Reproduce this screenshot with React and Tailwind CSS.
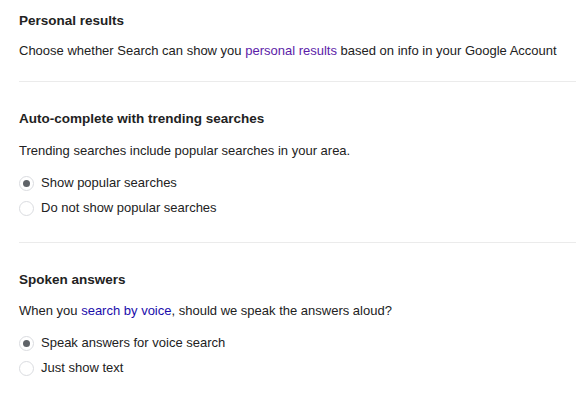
const Radio = ({ checked, label }) => (
  <label className="flex items-center h-[20px] gap-[7px] cursor-pointer">
    <span className="w-[15px] h-[15px] rounded-full border border-[#dadce0] bg-white flex items-center justify-center shrink-0">
      {checked && <span className="w-[7px] h-[7px] rounded-full bg-[#5f6368]" />}
    </span>
    <span>{label}</span>
  </label>
);

export default function App() {
  return (
    <div className="w-[576px] h-[402px] bg-white text-[#222] text-[13px] leading-[20px] overflow-hidden" style={{ fontFamily: 'Arial, "Liberation Sans", sans-serif' }}>
      {/* Personal results */}
      <div className="pl-[19px]">
        <div className="pt-[11px] pb-[20px]">
          <h2 className="font-bold text-[13.5px]">Personal results</h2>
          <p className="mt-[10px]">
            Choose whether Search can show you <a className="text-[#5c1ca8]">personal results</a> based on info in your Google Account
          </p>
        </div>
        <div className="h-px bg-[#ebebeb]" />
      </div>

      {/* Trending */}
      <div className="pl-[19px]">
        <div className="pt-[27px] pb-[24px]">
          <h2 className="font-bold text-[13.5px]">Auto-complete with trending searches</h2>
          <p className="mt-[12px]">Trending searches include popular searches in your area.</p>
          <div className="mt-[12px] flex flex-col gap-[5px]">
            <Radio checked label="Show popular searches" />
            <Radio label="Do not show popular searches" />
          </div>
        </div>
        <div className="h-px bg-[#ebebeb]" />
      </div>

      {/* Spoken answers */}
      <div className="pl-[19px]">
        <div className="pt-[27px]">
          <h2 className="font-bold text-[13.5px]">Spoken answers</h2>
          <p className="mt-[11px]">
            When you <a className="text-[#1a0dab]">search by voice</a>, should we speak the answers aloud?
          </p>
          <div className="mt-[12px] flex flex-col gap-[5px]">
            <Radio checked label="Speak answers for voice search" />
            <Radio label="Just show text" />
          </div>
        </div>
      </div>
    </div>
  );
}
